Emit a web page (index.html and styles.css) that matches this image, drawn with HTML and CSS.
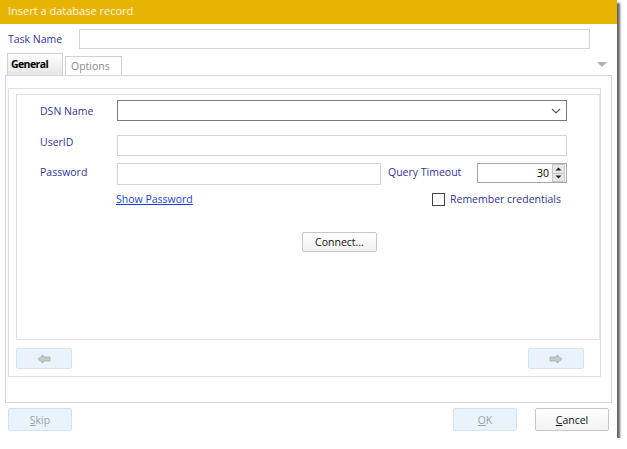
FILE: index.html
```html
<!DOCTYPE html>
<html>
<head>
<meta charset="utf-8">
<link rel="stylesheet" href="styles.css">
</head>
<body>
<div class="window">
  <div class="titlebar">Insert a database record</div>
  <div class="taskrow">
    <span class="label task-label">Task Name</span>
    <div class="input task-input"></div>
  </div>
  <div class="tabs">
    <div class="tab active">General</div>
    <div class="tab">Options</div>
    <div class="tab-menu"></div>
  </div>
  <div class="tabpage">
    <div class="midbox">
      <div class="innerbox">
        <div class="row row-dsn">
          <span class="label field-label">DSN Name</span>
          <div class="input select">
            <svg class="chev" width="10" height="6" viewBox="0 0 10 6"><path d="M1 1 L5 5 L9 1" fill="none" stroke="#555" stroke-width="1.1"/></svg>
          </div>
        </div>
        <div class="row row-user">
          <span class="label field-label user-label">UserID</span>
          <div class="input user-input"></div>
        </div>
        <div class="row row-pass">
          <span class="label field-label">Password</span>
          <div class="input pass-input"></div>
          <span class="label qt-label">Query Timeout</span>
          <div class="input spin">
            <span class="spin-val">30</span>
            <div class="spin-btns">
              <div class="spin-btn"><svg width="7" height="4" viewBox="0 0 7 4"><path d="M0.5 3.5 L3.5 0.5 L6.5 3.5Z" fill="#222"/></svg></div>
              <div class="spin-btn"><svg width="7" height="4" viewBox="0 0 7 4"><path d="M0.5 0.5 L3.5 3.5 L6.5 0.5Z" fill="#222"/></svg></div>
            </div>
          </div>
        </div>
        <div class="row row-links">
          <a class="link">Show Password</a>
          <span class="check"></span>
          <span class="label">Remember credentials</span>
        </div>
        <div class="row row-connect">
          <div class="btn connect">Connect...</div>
        </div>
      </div>
      <div class="navrow">
        <div class="btn disabled nav">
          <svg width="14" height="10" viewBox="0 0 14 10"><path d="M1 5 L6 1 L6 3 L13 3 L13 7 L6 7 L6 9 Z" fill="#c8c8c8" stroke="#a8a8a8" stroke-width="0.8"/></svg>
        </div>
        <div class="btn disabled nav">
          <svg width="14" height="10" viewBox="0 0 14 10"><path d="M13 5 L8 1 L8 3 L1 3 L1 7 L8 7 L8 9 Z" fill="#c8c8c8" stroke="#a8a8a8" stroke-width="0.8"/></svg>
        </div>
      </div>
    </div>
  </div>
  <div class="footer">
    <div class="btn disabled skip"><u>S</u>kip</div>
    <div class="spacer"></div>
    <div class="btn disabled ok"><u>O</u>K</div>
    <div class="btn cancel"><u>C</u>ancel</div>
  </div>
</div>
</body>
</html>
```

FILE: styles.css
```css
html, body {
  margin: 0;
  padding: 0;
  background: #ffffff;
}
body {
  font-family: "Open Sans", "Noto Sans", sans-serif;
  font-size: 10.5px;
}
.window {
  width: 617px;
  height: 438px;
  background: #ffffff;
  box-shadow: 3px 3px 2px rgba(0, 0, 0, 0.6);
  display: flex;
  flex-direction: column;
}
.titlebar {
  height: 24px;
  background: #e6b300;
  color: #fdf7e6;
  font-size: 11px;
  line-height: 22px;
  padding-left: 8px;
  box-sizing: border-box;
}
.label {
  color: #333399;
  white-space: nowrap;
}
.input {
  box-sizing: border-box;
  border: 1px solid #d4d4d4;
  background: #fff;
}
.taskrow {
  display: flex;
  align-items: center;
  margin-top: 5px;
  height: 20px;
  padding-left: 8px;
}
.task-label {
  width: 71px;
}
.task-input {
  width: 511px;
  height: 20px;
}
.tabs {
  display: flex;
  align-items: flex-end;
  margin-top: 4px;
  height: 22px;
  padding-left: 7px;
  position: relative;
}
.tab {
  box-sizing: border-box;
  height: 19px;
  width: 57px;
  margin-left: 2px;
  border: 1px solid #d0d0d0;
  border-bottom: none;
  color: #8a8a8a;
  padding-left: 5px;
  line-height: 18px;
  background: #fff;
}
.tab.active {
  height: 22px;
  width: 56px;
  margin-left: 0;
  color: #000;
  font-weight: bold;
  letter-spacing: -0.6px;
  padding-left: 3px;
  line-height: 20px;
  background: linear-gradient(#ffffff, #e6e6e6);
  border-color: #cfcfcf;
}
.tab-menu {
  position: absolute;
  right: 10px;
  top: 9px;
  width: 0;
  height: 0;
  border-left: 5px solid transparent;
  border-right: 5px solid transparent;
  border-top: 5px solid #b0b0b0;
}
.tabpage {
  box-sizing: border-box;
  margin-left: 5px;
  width: 607px;
  height: 328px;
  border: 1px solid #d8d8d8;
  padding: 12px 0 0 2px;
}
.midbox {
  box-sizing: border-box;
  width: 593px;
  height: 289px;
  border: 1px solid #e0e0e0;
  padding: 5px 0 0 7px;
}
.innerbox {
  box-sizing: border-box;
  width: 584px;
  height: 246px;
  border: 1px solid #e0e0e0;
  border-right-color: #e8e8e8;
  padding: 5px 0 0 23px;
}
.row {
  display: flex;
  align-items: center;
}
.field-label {
  width: 77px;
}
.select {
  position: relative;
  width: 450px;
  height: 21px;
  border-color: #7a7a7a;
}
.chev {
  position: absolute;
  right: 5px;
  top: 7px;
}
.row-user {
  margin-top: 14px;
}
.user-label {
  align-self: flex-start;
  line-height: 15px;
}
.user-input {
  width: 450px;
  height: 21px;
}
.row-pass {
  margin-top: 7px;
  align-items: flex-start;
}
.row-pass .field-label {
  line-height: 19px;
}
.pass-input {
  width: 264px;
  height: 22px;
}
.qt-label {
  margin-left: 7px;
  width: 89px;
  line-height: 19px;
}
.spin {
  width: 90px;
  height: 20px;
  border-color: #a8a8a8;
  display: flex;
  justify-content: flex-end;
  align-items: center;
}
.spin-val {
  color: #000;
  margin-right: 3px;
}
.spin-btns {
  display: flex;
  flex-direction: column;
  height: 18px;
  width: 13px;
  margin-right: 1px;
}
.spin-btn {
  flex: 1;
  background: #e6e6e6;
  border: 1px solid #c8c8c8;
  display: flex;
  align-items: center;
  justify-content: center;
}
.spin-btn + .spin-btn {
  border-top: none;
}
.row-links {
  margin-top: 6px;
  height: 16px;
  padding-left: 76px;
}
.link {
  color: #1a3fd6;
  text-decoration: underline;
  width: 316px;
}
.check {
  box-sizing: border-box;
  width: 13px;
  height: 13px;
  border: 1px solid #444;
  margin-right: 5px;
}
.btn {
  box-sizing: border-box;
  display: flex;
  align-items: center;
  justify-content: center;
  border: 1px solid #c6c6c6;
  border-radius: 2px;
  background: linear-gradient(#ffffff, #f2f2f2);
  color: #111;
}
.btn.disabled {
  background: #eaf2fb;
  border-color: #d4e3f4;
  color: #a0a0a0;
}
.row-connect {
  margin-top: 25px;
  padding-left: 262px;
}
.connect {
  width: 75px;
  height: 20px;
}
.navrow {
  display: flex;
  justify-content: space-between;
  margin-top: 8px;
  width: 568px;
}
.nav {
  width: 56px;
  height: 21px;
}
.footer {
  display: flex;
  margin-top: 5px;
  padding-left: 8px;
}
.footer .btn {
  height: 23px;
}
.skip {
  width: 64px;
}
.spacer {
  flex: 1;
  max-width: 381px;
}
.ok {
  width: 64px;
}
.cancel {
  width: 74px;
  margin-left: 18px;
}
```
